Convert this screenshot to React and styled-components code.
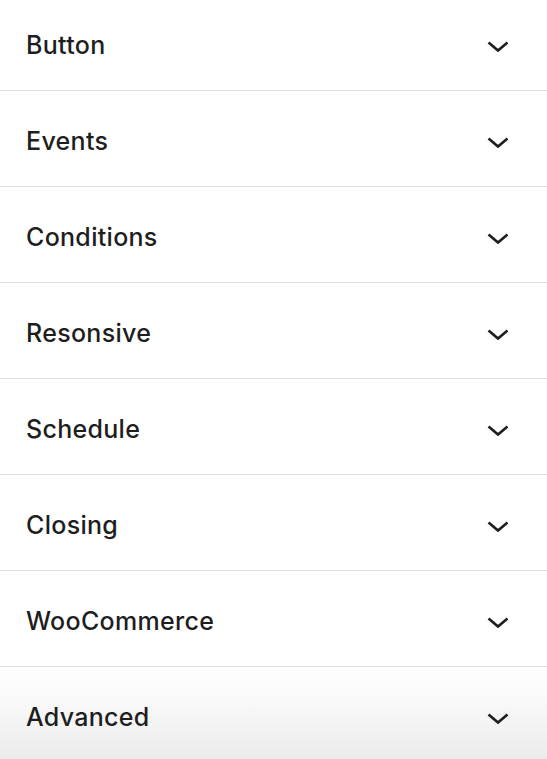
import React from "react";
import styled, { createGlobalStyle } from "styled-components";

const Global = createGlobalStyle`
  html, body { margin: 0; padding: 0; background: #fff; }
  body { font-family: Inter, "Noto Sans", sans-serif; -webkit-font-smoothing: antialiased; }
`;

const Panel = styled.div`
  width: 547px;
  height: 759px;
  overflow: hidden;
  background: #fff;
`;

const List = styled.div`
  display: flex;
  flex-direction: column;
  margin-top: -5px;
`;

const Row = styled.div`
  flex: 0 0 auto;
  height: 96px;
  display: flex;
  align-items: center;
  justify-content: space-between;
  padding: 4px 37px 0 26px;
  box-sizing: border-box;
  border-bottom: 1px solid #dedede;
  background: ${(p) =>
    p.$faded ? "linear-gradient(180deg, #ffffff 0%, #f8f8f8 40%, #eaeaea 100%)" : "#fff"};
`;

const Title = styled.span`
  font-size: 25px;
  font-weight: 500;
  color: #1e1e1e;
  letter-spacing: 0.3px;
`;

const Icon = styled.svg`
  margin-top: 4px;
  flex: 0 0 auto;
`;

const Chevron = () => (
  <Icon width="24" height="14" viewBox="0 0 24 14" fill="none">
    <path d="M2.5 2.5 L12 10.5 L21.5 2.5" stroke="#1e1e1e" strokeWidth="2.7" strokeLinecap="butt" strokeLinejoin="miter" />
  </Icon>
);

const items = ["Button", "Events", "Conditions", "Resonsive", "Schedule", "Closing", "WooCommerce", "Advanced"];

export default function App() {
  return (
    <>
      <Global />
      <Panel>
        <List>
          {items.map((t, i) => (
            <Row key={t} $faded={i === items.length - 1}>
              <Title>{t}</Title>
              <Chevron />
            </Row>
          ))}
        </List>
      </Panel>
    </>
  );
}
